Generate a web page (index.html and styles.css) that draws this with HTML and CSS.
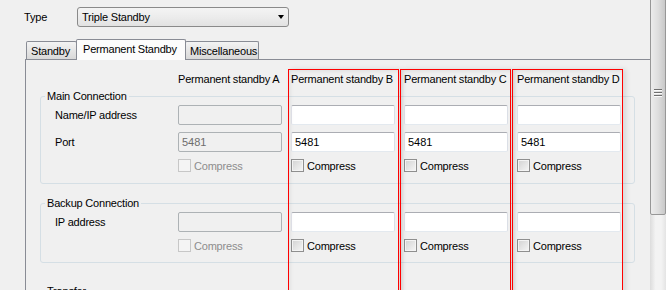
FILE: index.html
```html
<!DOCTYPE html>
<html>
<head>
  <meta charset="UTF-8">
  <title>Standby settings</title>
  <link rel="stylesheet" href="styles.css">
</head>
<body>
<div class="window">
  <div class="content">
    <div class="type-row">
      <span class="type-label">Type</span>
      <div class="combo"><span>Triple Standby</span><span class="combo-arrow"></span></div>
    </div>

    <div class="tabs">
      <div class="tab tab-standby">Standby</div>
      <div class="tab tab-active">Permanent Standby</div>
      <div class="tab tab-misc">Miscellaneous</div>
    </div>

    <div class="panel">
      <div class="cols head">
        <span></span>
        <span>Permanent standby A</span>
        <span>Permanent standby B</span>
        <span>Permanent standby C</span>
        <span>Permanent standby D</span>
      </div>

      <fieldset class="group group-main">
        <legend>Main Connection</legend>
        <div class="cols fields">
          <label>Name/IP address</label>
          <input class="field" disabled>
          <input class="field">
          <input class="field">
          <input class="field">

          <label>Port</label>
          <input class="field" disabled value="5481">
          <input class="field" value="5481">
          <input class="field" value="5481">
          <input class="field" value="5481">

          <span></span>
          <label class="check disabled"><span class="box"></span>Compress</label>
          <label class="check"><span class="box"></span>Compress</label>
          <label class="check"><span class="box"></span>Compress</label>
          <label class="check"><span class="box"></span>Compress</label>
        </div>
      </fieldset>

      <fieldset class="group group-backup">
        <legend>Backup Connection</legend>
        <div class="cols fields">
          <label>IP address</label>
          <input class="field" disabled>
          <input class="field">
          <input class="field">
          <input class="field">

          <span></span>
          <label class="check disabled"><span class="box"></span>Compress</label>
          <label class="check"><span class="box"></span>Compress</label>
          <label class="check"><span class="box"></span>Compress</label>
          <label class="check"><span class="box"></span>Compress</label>
        </div>
      </fieldset>

      <fieldset class="group group-transfer">
        <legend>Transfer</legend>
        <div class="cols fields">
          <label>Mode</label>
        </div>
      </fieldset>

      <!-- highlight frames drawn over the B/C/D columns -->
      <div class="highlight col-b"></div>
      <div class="highlight col-c"></div>
      <div class="highlight col-d"></div>
    </div>
  </div>

  <div class="scrollbar">
    <div class="thumb"><span class="grip"></span></div>
  </div>
</div>
</body>
</html>
```

FILE: styles.css
```css
body {
  margin: 0;
  background: #f0f0f0;
  font-family: "Liberation Sans", Arial, sans-serif;
  font-size: 11px;
  letter-spacing: -0.2px;
  color: #000;
  overflow: hidden;
}

.window {
  display: flex;
  height: 290px;
  overflow: hidden;
}

.content {
  width: 650px;
  flex: none;
}

/* type selector */
.type-row {
  display: flex;
  align-items: center;
  padding: 7px 0 0 24px;
}

.type-label {
  width: 53px;
}

.combo {
  width: 212px;
  height: 20px;
  box-sizing: border-box;
  border: 1px solid #8a8a8a;
  border-radius: 3px;
  background: linear-gradient(#f4f4f4, #ececec 50%, #e2e2e2);
  display: flex;
  align-items: center;
  justify-content: space-between;
  padding: 0 4px 0 4px;
}

.combo-arrow {
  width: 0;
  height: 0;
  border-top: 4px solid #000;
  border-left: 3.5px solid transparent;
  border-right: 3.5px solid transparent;
}

/* tabs */
.tabs {
  display: flex;
  align-items: flex-end;
  height: 20px;
  margin-top: 12px;
  padding-left: 26px;
}

.tab {
  height: 18px;
  box-sizing: border-box;
  border: 1px solid #898c95;
  border-bottom: none;
  border-radius: 2px 2px 0 0;
  background: linear-gradient(#f3f3f3, #e6e6e6 50%, #d9d9d9);
  line-height: 18px;
  padding-left: 4px;
  white-space: nowrap;
}

.tab + .tab {
  margin-left: -1px;
}

.tab-standby {
  width: 51px;
}

.tab-active {
  width: 110px;
  height: 21px;
  margin-bottom: -1px;
  padding-left: 6px;
  line-height: 18px;
  background: #fcfcfc;
  position: relative;
  z-index: 1;
}

.tab-misc {
  width: 74px;
}

/* tab page */
.panel {
  position: relative;
  margin-left: 25px;
  border-left: 1px solid #898c95;
  border-top: 1px solid #898c95;
  height: 260px;
  overflow: hidden;
}

.cols {
  display: grid;
  grid-template-columns: 114px repeat(4, 104px);
  column-gap: 9px;
}

.head {
  margin-left: 29px;
  padding-top: 12px;
  line-height: 14px;
  white-space: nowrap;
}

.group {
  margin: 3px 15px 0 14px;
  padding: 0 0 11px 4px;
  border: 1px solid #d5dfe5;
  border-radius: 3px;
  min-width: 0;
}

.group legend {
  padding: 0 2px;
  line-height: 14px;
}

.group-backup {
  margin-top: 12px;
  padding-bottom: 10px;
}

.group-transfer {
  margin-top: 21px;
}

.fields {
  margin: 2px 0 0 10px;
  row-gap: 7px;
  align-items: center;
}

.field {
  width: 104px;
  height: 20px;
  box-sizing: border-box;
  margin: 0;
  padding: 0 3px;
  border: 1px solid;
  border-color: #abadb3 #dbdfe6 #e3e9ef #e2e3ea;
  border-radius: 2px;
  background: #fff;
  font: inherit;
  color: #000;
  outline: none;
}

.field:disabled {
  background: #f0f0f0;
  border-color: #adb2b5;
  color: #6d6d6d;
}

.check {
  display: flex;
  align-items: center;
  gap: 3px;
  height: 13px;
  white-space: nowrap;
}

.check .box {
  width: 13px;
  height: 13px;
  box-sizing: border-box;
  border: 1px solid #8f8f8f;
  background: linear-gradient(135deg, #d2d2d2, #f6f6f6);
  box-shadow: inset 0 0 0 1px #f4f4f4;
}

.check.disabled {
  color: #8d8d8d;
}

.check.disabled .box {
  border-color: #c7c7c7;
  background: #f4f4f4;
  box-shadow: none;
}

/* red frames over the editable columns */
.highlight {
  position: absolute;
  top: 9px;
  bottom: -10px;
  width: 111px;
  box-sizing: border-box;
  border: 1px solid #ff0000;
  box-shadow: 3px 0 5px rgba(0, 0, 0, 0.1), inset 3px 3px 4px -2px rgba(0, 0, 0, 0.08);
  pointer-events: none;
}

.col-b {
  left: 262px;
}

.col-c {
  left: 374px;
}

.col-d {
  left: 486px;
}

/* vertical scrollbar */
.scrollbar {
  width: 16px;
  flex: none;
  background: linear-gradient(to right, #dcdcdc, #f3f3f3 35%, #f3f3f3 70%, #e4e4e4);
}

.thumb {
  margin-top: -30px;
  height: 245px;
  box-sizing: border-box;
  border: 1px solid #979797;
  border-radius: 2px;
  background: linear-gradient(to right, #ececec, #dedede 50%, #c8c8c8);
  display: flex;
  align-items: center;
  justify-content: center;
}

.grip {
  width: 8px;
  height: 8px;
  background: repeating-linear-gradient(#6f6f6f 0 1px, #fbfbfb 1px 2px, transparent 2px 3px);
}
```
